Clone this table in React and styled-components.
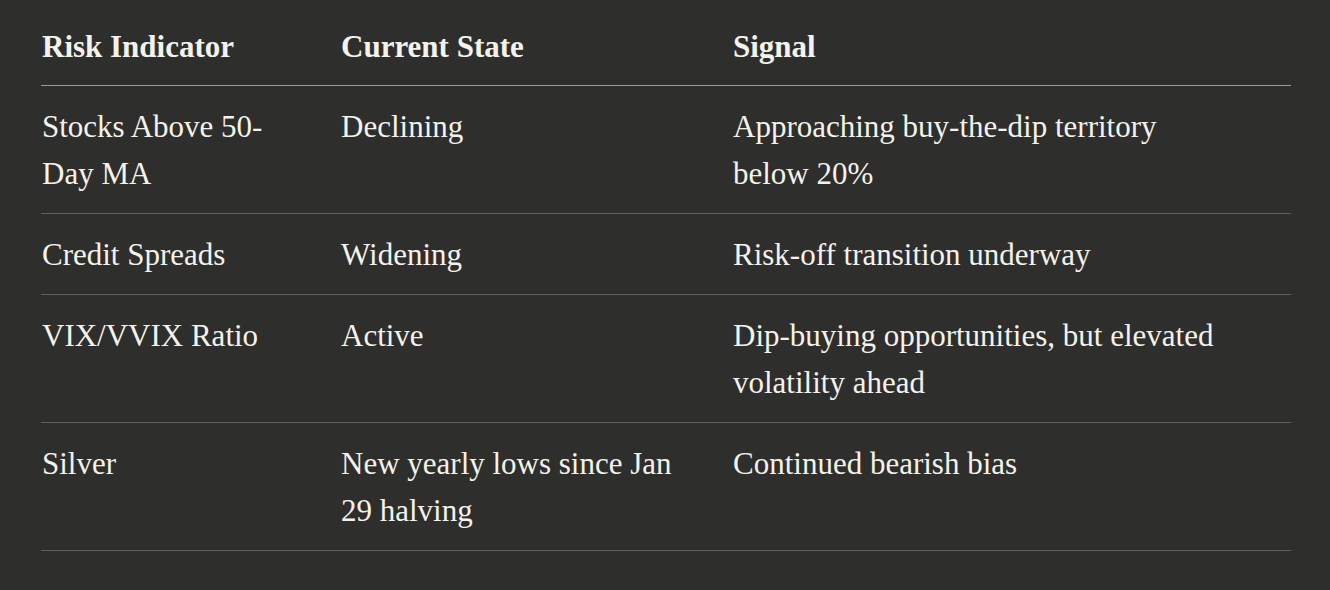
import React from 'react'
import styled, { createGlobalStyle } from 'styled-components';

const rows = [
    { indicator: 'Stocks Above 50-Day MA', state: 'Declining', signal: 'Approaching buy-the-dip territory below 20%' },
    { indicator: 'Credit Spreads', state: 'Widening', signal: 'Risk-off transition underway' },
    { indicator: 'VIX/VVIX Ratio', state: 'Active', signal: 'Dip-buying opportunities, but elevated volatility ahead' },
    { indicator: 'Silver', state: 'New yearly lows since Jan 29 halving', signal: 'Continued bearish bias' },
];

const GlobalStyle = createGlobalStyle`
    html, body {
        margin: 0;
        background: #2e2e2d;
    }
`;

const App = () => (
    <Page>
        <GlobalStyle />
        <Table>
            <colgroup>
                <col style={{ width: 299 }} />
                <col style={{ width: 392 }} />
                <col style={{ width: 559 }} />
            </colgroup>
            <thead>
                <tr>
                    <Head>Risk Indicator</Head>
                    <Head>Current State</Head>
                    <Head>Signal</Head>
                </tr>
            </thead>
            <tbody>
                {rows.map((row) => (
                    <tr key={row.indicator}>
                        <Cell>{row.indicator}</Cell>
                        <Cell>{row.state}</Cell>
                        <Cell>{row.signal}</Cell>
                    </tr>
                ))}
            </tbody>
        </Table>
    </Page>
)

export default App;

/*
    Styles
*/
const Page = styled.div`
    width: 1330px;
    height: 590px;
    box-sizing: border-box;
    padding: 23px 39px 0 41px;
    background: #2e2e2d;
    font-family: "Liberation Serif", "Times New Roman", serif;
    color: #f4f2ec;
`;

const Table = styled.table`
    width: 1250px;
    table-layout: fixed;
    border-collapse: collapse;
    border-spacing: 0;
`;

const Head = styled.th`
    padding: 0 40px 15px 1px;
    text-align: left;
    font-size: 31px;
    font-weight: bold;
    line-height: 47px;
    border-bottom: 1px solid #9a9a98;
`;

const Cell = styled.td`
    padding: 17px 40px 16px 1px;
    vertical-align: top;
    font-size: 31px;
    line-height: 47px;
    border-bottom: 1px solid #5e5e5c;

    &:last-child {
        padding-right: 63px;
    }
`;
